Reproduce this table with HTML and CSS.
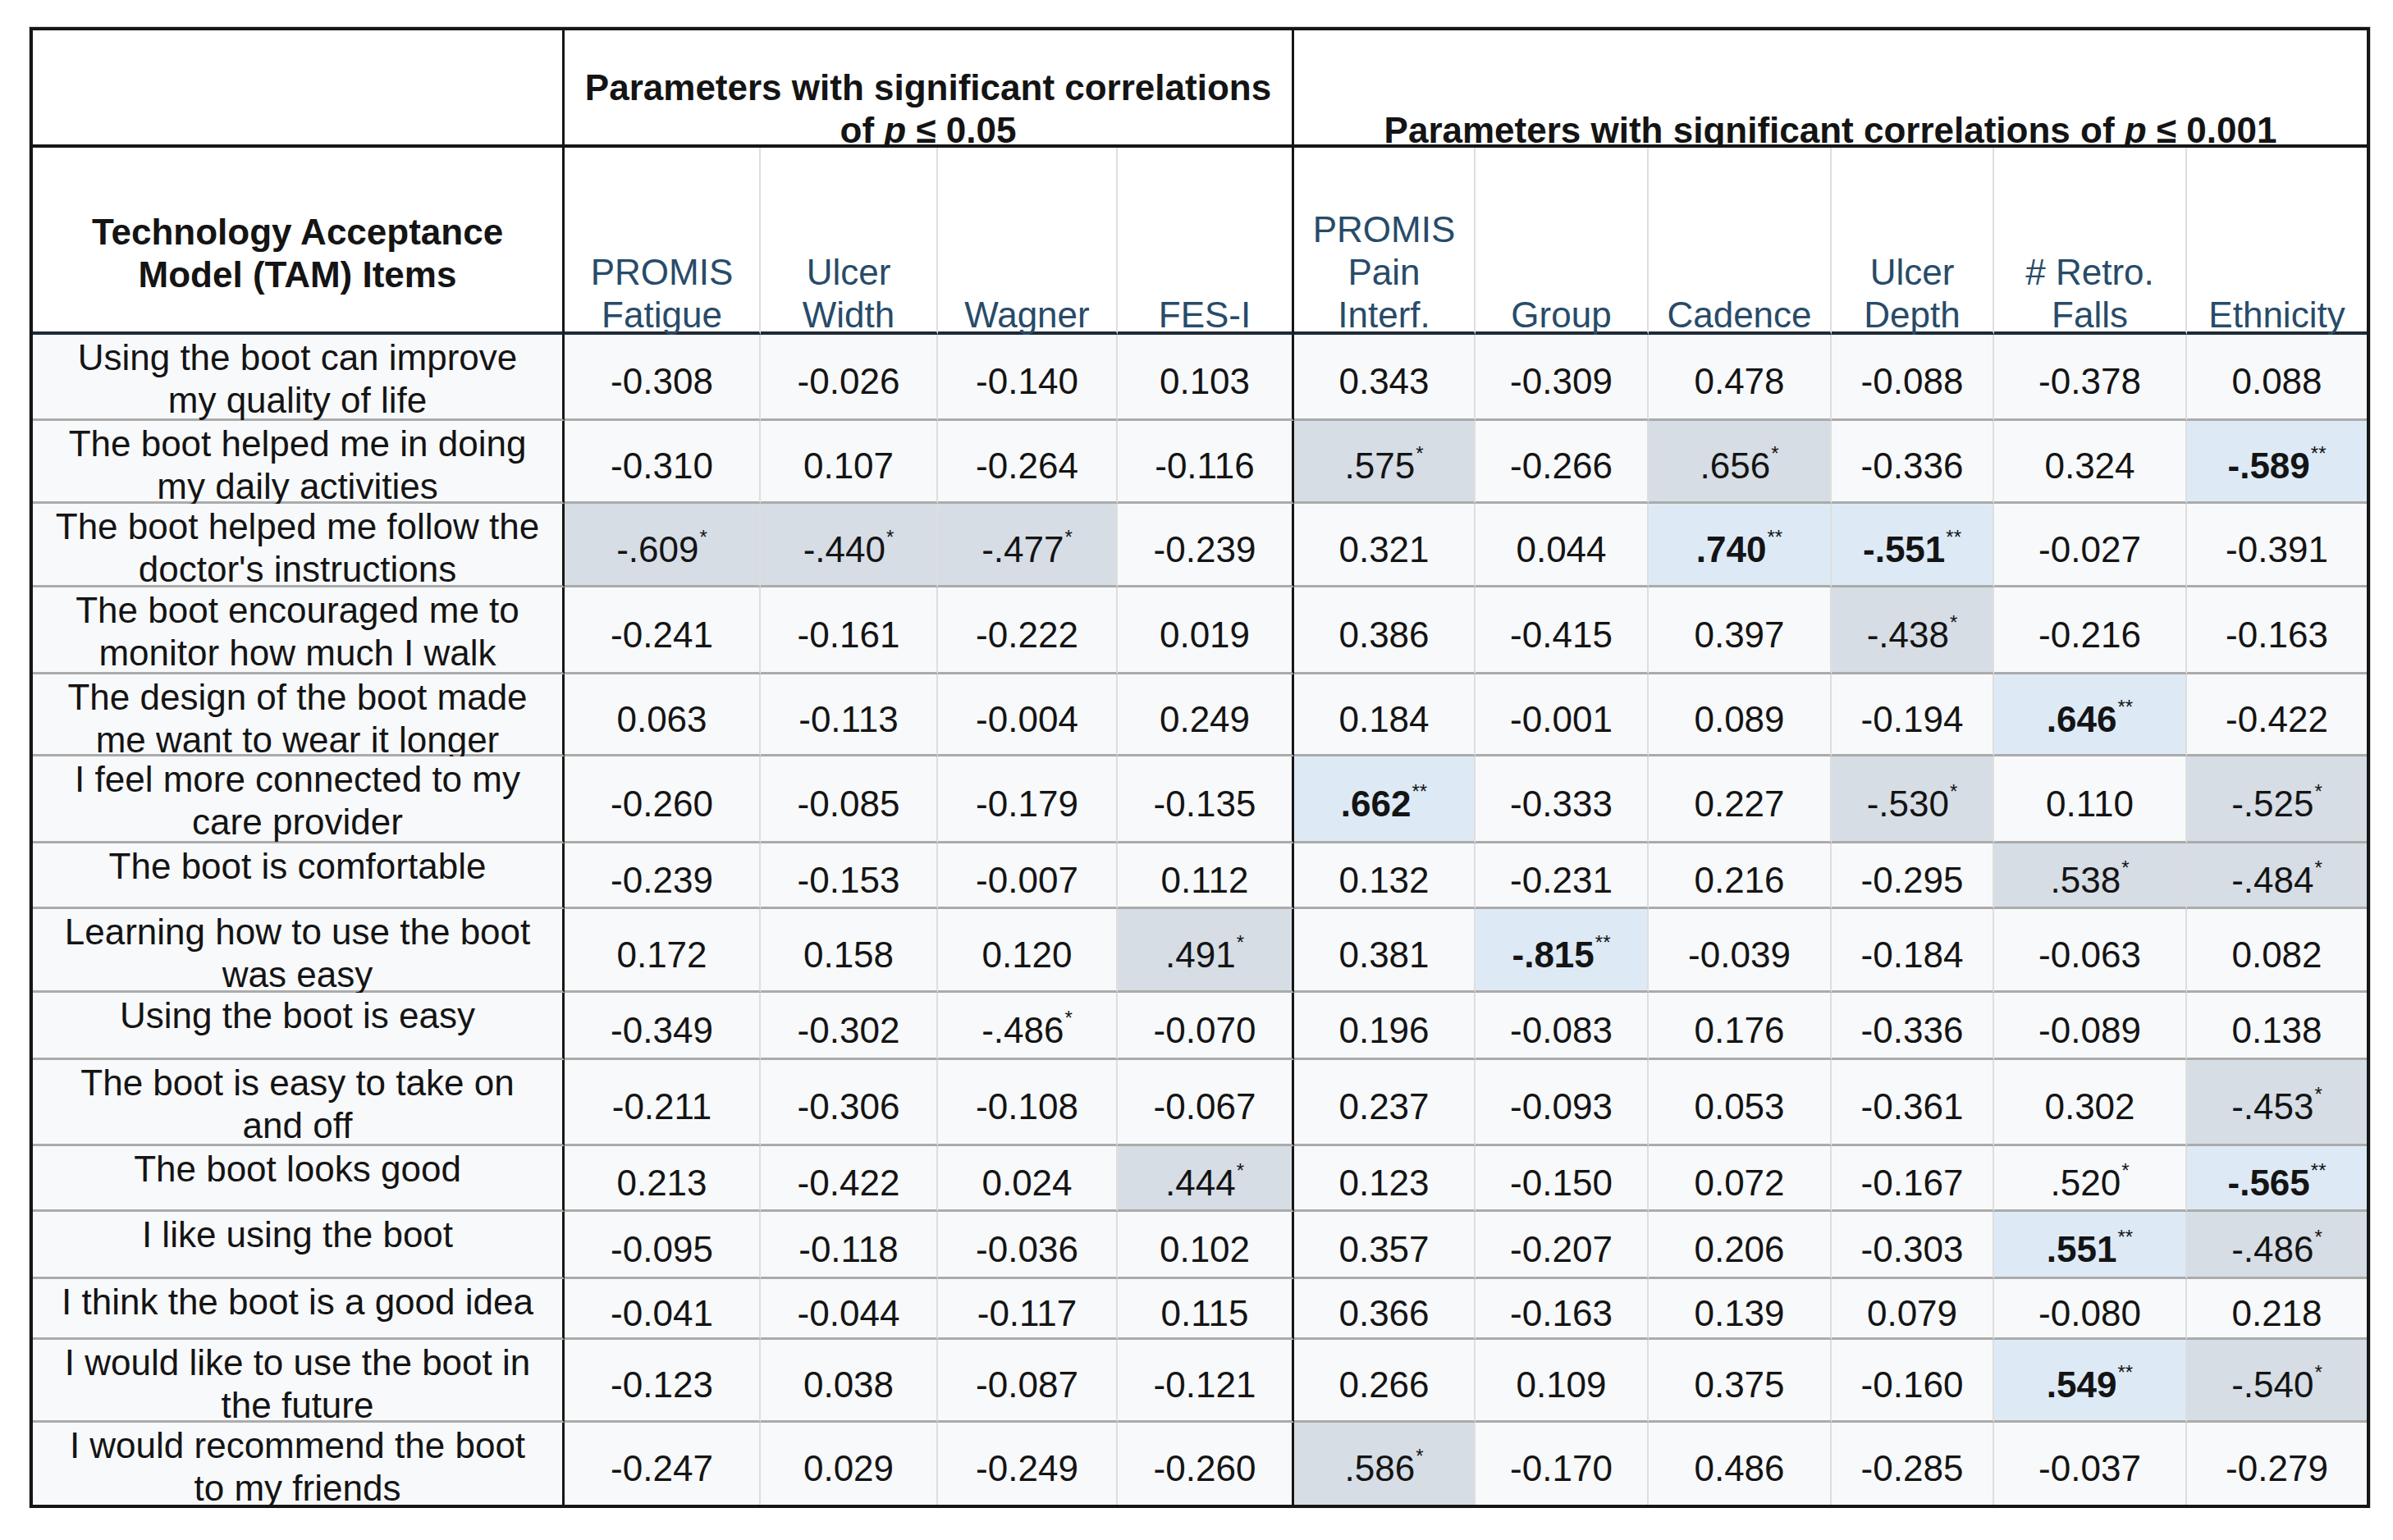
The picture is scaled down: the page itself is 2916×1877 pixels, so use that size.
FILE: index.html
```html
<!DOCTYPE html>
<html lang="en">
<head>
<meta charset="utf-8">
<title>TAM correlations</title>
<link rel="stylesheet" href="styles.css">
</head>
<body>
<div class="page">
<div class="table">
  <div class="cell hd1 sep"></div>
  <div class="cell hd1 sep grp1"><div class="t">Parameters with significant correlations<br>of <i>p</i> ≤ 0.05</div></div>
  <div class="cell hd1 grp2"><div class="t">Parameters with significant correlations of <i>p</i> ≤ 0.001</div></div>

  <div class="cell hd2 sep tam"><div>Technology Acceptance<br>Model (TAM) Items</div></div>
  <div class="cell hd2 div"><div class="t">PROMIS<br>Fatigue</div></div>
  <div class="cell hd2 div"><div class="t">Ulcer<br>Width</div></div>
  <div class="cell hd2 div"><div class="t">Wagner</div></div>
  <div class="cell hd2 sep"><div class="t">FES-I</div></div>
  <div class="cell hd2 div"><div class="t">PROMIS<br>Pain<br>Interf.</div></div>
  <div class="cell hd2 div"><div class="t">Group</div></div>
  <div class="cell hd2 div"><div class="t">Cadence</div></div>
  <div class="cell hd2 div"><div class="t">Ulcer<br>Depth</div></div>
  <div class="cell hd2 div"><div class="t"># Retro.<br>Falls</div></div>
  <div class="cell hd2"><div class="t">Ethnicity</div></div>

  <!-- 1 -->
  <div class="cell item sep">Using the boot can improve<br>my quality of life</div>
  <div class="cell num div">-0.308</div>
  <div class="cell num div">-0.026</div>
  <div class="cell num div">-0.140</div>
  <div class="cell num sep">0.103</div>
  <div class="cell num div">0.343</div>
  <div class="cell num div">-0.309</div>
  <div class="cell num div">0.478</div>
  <div class="cell num div">-0.088</div>
  <div class="cell num div">-0.378</div>
  <div class="cell num">0.088</div>

  <!-- 2 -->
  <div class="cell item sep">The boot helped me in doing<br>my daily activities</div>
  <div class="cell num div">-0.310</div>
  <div class="cell num div">0.107</div>
  <div class="cell num div">-0.264</div>
  <div class="cell num sep">-0.116</div>
  <div class="cell num div g">.575<sup>*</sup></div>
  <div class="cell num div">-0.266</div>
  <div class="cell num div g">.656<sup>*</sup></div>
  <div class="cell num div">-0.336</div>
  <div class="cell num div">0.324</div>
  <div class="cell num b"><b>-.589</b><sup>**</sup></div>

  <!-- 3 -->
  <div class="cell item sep">The boot helped me follow the<br>doctor's instructions</div>
  <div class="cell num div g">-.609<sup>*</sup></div>
  <div class="cell num div g">-.440<sup>*</sup></div>
  <div class="cell num div g">-.477<sup>*</sup></div>
  <div class="cell num sep">-0.239</div>
  <div class="cell num div">0.321</div>
  <div class="cell num div">0.044</div>
  <div class="cell num div b"><b>.740</b><sup>**</sup></div>
  <div class="cell num div b"><b>-.551</b><sup>**</sup></div>
  <div class="cell num div">-0.027</div>
  <div class="cell num">-0.391</div>

  <!-- 4 -->
  <div class="cell item sep">The boot encouraged me to<br>monitor how much I walk</div>
  <div class="cell num div">-0.241</div>
  <div class="cell num div">-0.161</div>
  <div class="cell num div">-0.222</div>
  <div class="cell num sep">0.019</div>
  <div class="cell num div">0.386</div>
  <div class="cell num div">-0.415</div>
  <div class="cell num div">0.397</div>
  <div class="cell num div g">-.438<sup>*</sup></div>
  <div class="cell num div">-0.216</div>
  <div class="cell num">-0.163</div>

  <!-- 5 -->
  <div class="cell item sep">The design of the boot made<br>me want to wear it longer</div>
  <div class="cell num div">0.063</div>
  <div class="cell num div">-0.113</div>
  <div class="cell num div">-0.004</div>
  <div class="cell num sep">0.249</div>
  <div class="cell num div">0.184</div>
  <div class="cell num div">-0.001</div>
  <div class="cell num div">0.089</div>
  <div class="cell num div">-0.194</div>
  <div class="cell num div b"><b>.646</b><sup>**</sup></div>
  <div class="cell num">-0.422</div>

  <!-- 6 -->
  <div class="cell item sep">I feel more connected to my<br>care provider</div>
  <div class="cell num div">-0.260</div>
  <div class="cell num div">-0.085</div>
  <div class="cell num div">-0.179</div>
  <div class="cell num sep">-0.135</div>
  <div class="cell num div b"><b>.662</b><sup>**</sup></div>
  <div class="cell num div">-0.333</div>
  <div class="cell num div">0.227</div>
  <div class="cell num div g">-.530<sup>*</sup></div>
  <div class="cell num div">0.110</div>
  <div class="cell num g">-.525<sup>*</sup></div>

  <!-- 7 -->
  <div class="cell item sep">The boot is comfortable</div>
  <div class="cell num div">-0.239</div>
  <div class="cell num div">-0.153</div>
  <div class="cell num div">-0.007</div>
  <div class="cell num sep">0.112</div>
  <div class="cell num div">0.132</div>
  <div class="cell num div">-0.231</div>
  <div class="cell num div">0.216</div>
  <div class="cell num div">-0.295</div>
  <div class="cell num div g">.538<sup>*</sup></div>
  <div class="cell num g">-.484<sup>*</sup></div>

  <!-- 8 -->
  <div class="cell item sep">Learning how to use the boot<br>was easy</div>
  <div class="cell num div">0.172</div>
  <div class="cell num div">0.158</div>
  <div class="cell num div">0.120</div>
  <div class="cell num sep g">.491<sup>*</sup></div>
  <div class="cell num div">0.381</div>
  <div class="cell num div b"><b>-.815</b><sup>**</sup></div>
  <div class="cell num div">-0.039</div>
  <div class="cell num div">-0.184</div>
  <div class="cell num div">-0.063</div>
  <div class="cell num">0.082</div>

  <!-- 9 -->
  <div class="cell item sep">Using the boot is easy</div>
  <div class="cell num div">-0.349</div>
  <div class="cell num div">-0.302</div>
  <div class="cell num div">-.486<sup>*</sup></div>
  <div class="cell num sep">-0.070</div>
  <div class="cell num div">0.196</div>
  <div class="cell num div">-0.083</div>
  <div class="cell num div">0.176</div>
  <div class="cell num div">-0.336</div>
  <div class="cell num div">-0.089</div>
  <div class="cell num">0.138</div>

  <!-- 10 -->
  <div class="cell item sep">The boot is easy to take on<br>and off</div>
  <div class="cell num div">-0.211</div>
  <div class="cell num div">-0.306</div>
  <div class="cell num div">-0.108</div>
  <div class="cell num sep">-0.067</div>
  <div class="cell num div">0.237</div>
  <div class="cell num div">-0.093</div>
  <div class="cell num div">0.053</div>
  <div class="cell num div">-0.361</div>
  <div class="cell num div">0.302</div>
  <div class="cell num g">-.453<sup>*</sup></div>

  <!-- 11 -->
  <div class="cell item sep">The boot looks good</div>
  <div class="cell num div">0.213</div>
  <div class="cell num div">-0.422</div>
  <div class="cell num div">0.024</div>
  <div class="cell num sep g">.444<sup>*</sup></div>
  <div class="cell num div">0.123</div>
  <div class="cell num div">-0.150</div>
  <div class="cell num div">0.072</div>
  <div class="cell num div">-0.167</div>
  <div class="cell num div">.520<sup>*</sup></div>
  <div class="cell num b"><b>-.565</b><sup>**</sup></div>

  <!-- 12 -->
  <div class="cell item sep">I like using the boot</div>
  <div class="cell num div">-0.095</div>
  <div class="cell num div">-0.118</div>
  <div class="cell num div">-0.036</div>
  <div class="cell num sep">0.102</div>
  <div class="cell num div">0.357</div>
  <div class="cell num div">-0.207</div>
  <div class="cell num div">0.206</div>
  <div class="cell num div">-0.303</div>
  <div class="cell num div b"><b>.551</b><sup>**</sup></div>
  <div class="cell num g">-.486<sup>*</sup></div>

  <!-- 13 -->
  <div class="cell item sep">I think the boot is a good idea</div>
  <div class="cell num div">-0.041</div>
  <div class="cell num div">-0.044</div>
  <div class="cell num div">-0.117</div>
  <div class="cell num sep">0.115</div>
  <div class="cell num div">0.366</div>
  <div class="cell num div">-0.163</div>
  <div class="cell num div">0.139</div>
  <div class="cell num div">0.079</div>
  <div class="cell num div">-0.080</div>
  <div class="cell num">0.218</div>

  <!-- 14 -->
  <div class="cell item sep">I would like to use the boot in<br>the future</div>
  <div class="cell num div">-0.123</div>
  <div class="cell num div">0.038</div>
  <div class="cell num div">-0.087</div>
  <div class="cell num sep">-0.121</div>
  <div class="cell num div">0.266</div>
  <div class="cell num div">0.109</div>
  <div class="cell num div">0.375</div>
  <div class="cell num div">-0.160</div>
  <div class="cell num div b"><b>.549</b><sup>**</sup></div>
  <div class="cell num g">-.540<sup>*</sup></div>

  <!-- 15 -->
  <div class="cell item sep last">I would recommend the boot<br>to my friends</div>
  <div class="cell num div last">-0.247</div>
  <div class="cell num div last">0.029</div>
  <div class="cell num div last">-0.249</div>
  <div class="cell num sep last">-0.260</div>
  <div class="cell num div last g">.586<sup>*</sup></div>
  <div class="cell num div last">-0.170</div>
  <div class="cell num div last">0.486</div>
  <div class="cell num div last">-0.285</div>
  <div class="cell num div last">-0.037</div>
  <div class="cell num last">-0.279</div>
</div>
</div>
</body>
</html>
```

FILE: styles.css
```css
* { box-sizing: border-box; }

body {
  margin: 0;
  background: #ffffff;
  font-family: "Liberation Sans", Arial, sans-serif;
  color: #141414;
}

.page {
  padding: 33px 0 0 36px;
}

.table {
  display: grid;
  width: 2852px;
  border: 4px solid #161616;
  box-shadow: 0 0 0 1px #d4d4d4;
  grid-template-columns: 648px 239px 216px 219px 215px 221px 211px 223px 198px 235px 219px;
  grid-template-rows: 143px 228px 105px 101px 102px 106px 100px 106px 80px 102px 82px 105px 80px 82px 74px 101px 100px;
}

.cell {
  display: flex;
  flex-direction: column;
  align-items: center;
  text-align: center;
  font-size: 44px;
  line-height: 52px;
  min-width: 0;
  white-space: nowrap;
}

.grp1 { grid-column: span 4; }
.grp2 { grid-column: span 6; }

.hd1 {
  background: #ffffff;
  border-bottom: 4px solid #161616;
  justify-content: flex-end;
  font-weight: bold;
}
.hd1 .t { margin-bottom: -9px; }

.hd2 {
  background: #ffffff;
  border-bottom: 4px solid #1d2a38;
  justify-content: flex-end;
  color: #284b69;
}
.hd2 .t { margin-bottom: -6px; }

.hd2.tam {
  color: #141414;
  font-weight: bold;
  padding-bottom: 43px;
}

.item {
  background: #f8f9fb;
  justify-content: flex-start;
  padding-top: 2px;
  border-bottom: 3px solid #ababab;
}

.num {
  background: #f8f9fb;
  justify-content: center;
  flex-direction: row;
  padding-top: 12px;
  border-bottom: 3px solid #ababab;
}

.sep { border-right: 3px solid #161616; }
.div { border-right: 2px solid #dedede; }
.last { border-bottom: none; }

.g { background: #d6dde5; }
.b { background: #ddeaf6; }

.num b { font-weight: bold; }

.num sup {
  font-size: 24px;
  line-height: 0;
  align-self: center;
  transform: translateY(-15px);
  margin-left: 1px;
}
```
